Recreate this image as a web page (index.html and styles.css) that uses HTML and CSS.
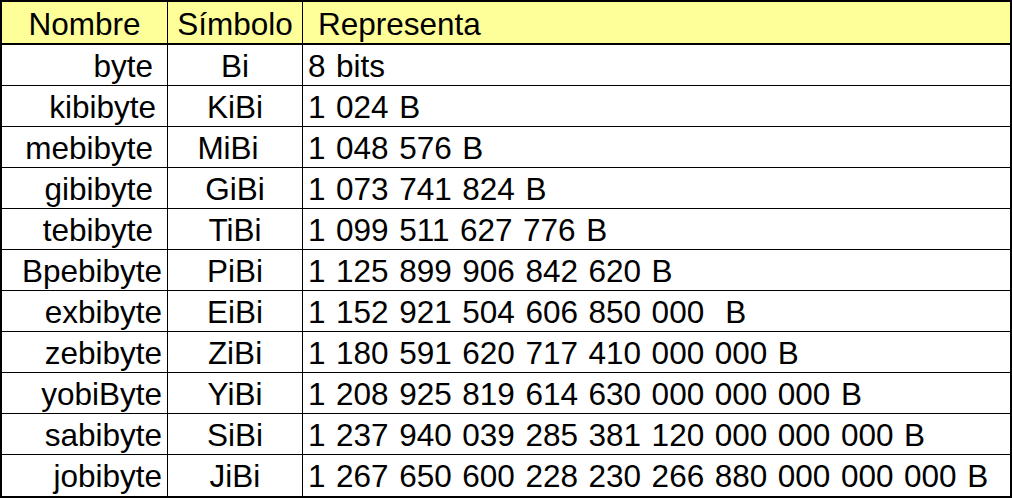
FILE: index.html
```html
<!DOCTYPE html>
<html lang="es">
<head>
<meta charset="utf-8">
<title>Unidades binarias</title>
<link rel="stylesheet" href="styles.css">
</head>
<body>
<table class="units">
  <colgroup>
    <col class="col-name">
    <col class="col-sym">
    <col class="col-rep">
  </colgroup>
  <thead>
    <tr>
      <th class="name">Nombre</th>
      <th class="sym">Símbolo</th>
      <th class="rep">Representa</th>
    </tr>
  </thead>
  <tbody>
    <tr><td class="name wide">byte</td><td class="sym">Bi</td><td class="rep">8 bits</td></tr>
    <tr><td class="name mid">kibibyte</td><td class="sym">KiBi</td><td class="rep">1 024 B</td></tr>
    <tr><td class="name wide">mebibyte</td><td class="sym shift">MiBi</td><td class="rep">1 048 576 B</td></tr>
    <tr><td class="name wide">gibibyte</td><td class="sym">GiBi</td><td class="rep">1 073 741 824 B</td></tr>
    <tr><td class="name wide">tebibyte</td><td class="sym">TiBi</td><td class="rep">1 099 511 627 776 B</td></tr>
    <tr><td class="name">Bpebibyte</td><td class="sym">PiBi</td><td class="rep">1 125 899 906 842 620 B</td></tr>
    <tr><td class="name">exbibyte</td><td class="sym">EiBi</td><td class="rep">1 152 921 504 606 850 000&nbsp; B</td></tr>
    <tr><td class="name">zebibyte</td><td class="sym">ZiBi</td><td class="rep">1 180 591 620 717 410 000 000 B</td></tr>
    <tr><td class="name">yobiByte</td><td class="sym">YiBi</td><td class="rep">1 208 925 819 614 630 000 000 000 B</td></tr>
    <tr><td class="name">sabibyte</td><td class="sym">SiBi</td><td class="rep">1 237 940 039 285 381 120 000 000 000 B</td></tr>
    <tr><td class="name">jobibyte</td><td class="sym">JiBi</td><td class="rep">1 267 650 600 228 230 266 880 000 000 000 B</td></tr>
  </tbody>
</table>
</body>
</html>
```
FILE: styles.css
```css
html, body {
  margin: 0;
  padding: 0;
  background: #ffffff;
}

.units {
  width: 1012px;
  table-layout: fixed;
  border-collapse: separate;
  border-spacing: 0;
  border: 2px solid #000;
  font-family: "Liberation Sans", Arial, sans-serif;
  font-size: 31.5px;
  color: #000;
}

.col-name { width: 166px; }
.col-sym { width: 135px; }
.col-rep { width: 707px; }

.units th,
.units td {
  padding: 0;
  line-height: 1;
  vertical-align: middle;
  white-space: nowrap;
  border-right: 1px solid #000;
  border-bottom: 1px solid #000;
  font-weight: normal;
}

.units th:last-child,
.units td:last-child {
  border-right: 0;
}

.units tbody tr:last-child td {
  border-bottom: 0;
}

.units thead tr {
  height: 43px;
}

.units th {
  background: #ffff99;
  border-bottom: 2px solid #000;
  padding-top: 4px;
}

.units tbody tr {
  height: 41px;
}

.units td {
  padding-top: 3px;
}

.units th.name,
.units th.sym {
  text-align: center;
}

.units th.rep {
  text-align: left;
  padding-left: 15px;
}

.units td.name {
  text-align: right;
  padding-right: 5px;
}

.units td.name.wide {
  padding-right: 14px;
}

.units td.name.mid {
  padding-right: 11px;
}

.units td.sym {
  text-align: center;
}

.units td.sym.shift {
  padding-right: 14px;
}

.units td.rep {
  text-align: left;
  padding-left: 5px;
  word-spacing: 1.8px;
}
```
